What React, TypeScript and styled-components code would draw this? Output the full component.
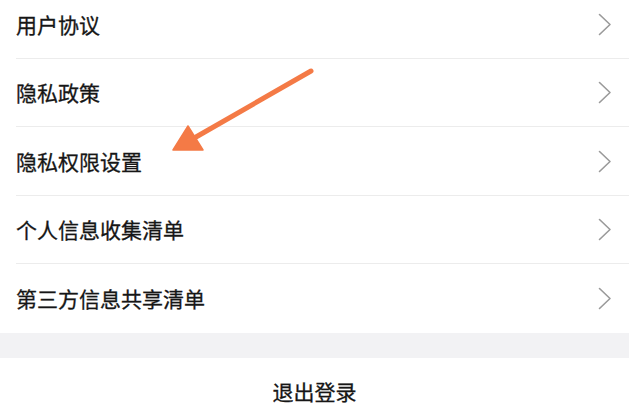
import { createGlobalStyle, styled } from 'styled-components';

const GlobalStyle = createGlobalStyle`
  html, body {
    margin: 0;
    padding: 0;
    background: #ffffff;
    overflow: hidden;
  }
  body {
    font-family: "Noto Sans CJK SC", "Noto Sans", sans-serif;
  }
`;

const items = ['用户协议', '隐私政策', '隐私权限设置', '个人信息收集清单', '第三方信息共享清单'];

const Chevron = () => (
  <svg width="14" height="23" viewBox="0 0 14 23" fill="none">
    <path d="M1.5 1.5 L12 11.5 L1.5 21.5" stroke="#9a9a9a" strokeWidth="1.6" strokeLinecap="round" strokeLinejoin="round" />
  </svg>
);

const Arrow = () => (
  <S.ArrowLayer width="629" height="413" viewBox="0 0 629 413">
    <line x1="311" y1="71" x2="196" y2="137" stroke="#f47a46" strokeWidth="5" strokeLinecap="round" />
    <polygon points="188,126 173,150 203,150" fill="#f47a46" stroke="#f47a46" strokeWidth="1.5" strokeLinejoin="round" />
  </S.ArrowLayer>
);

const App = () => {
  return (
    <S.Page>
      <GlobalStyle />
      <S.List>
        {items.map((label, i) => (
          <S.Row key={label} $last={i === items.length - 1}>
            <S.Label>{label}</S.Label>
            <S.ChevronBox>
              <Chevron />
            </S.ChevronBox>
          </S.Row>
        ))}
      </S.List>
      <S.Gap />
      <S.Logout>退出登录</S.Logout>
      <Arrow />
    </S.Page>
  );
};

export default App;

const S = {
  Page: styled.div`
    position: relative;
    width: 629px;
    height: 413px;
    overflow: hidden;
    background: #ffffff;
  `,
  List: styled.div`
    margin-top: -10px;
    display: flex;
    flex-direction: column;
  `,
  Row: styled.div<{ $last: boolean }>`
    height: 68.5px;
    margin-left: 16px;
    padding-right: 17px;
    display: flex;
    align-items: center;
    justify-content: space-between;
    box-sizing: border-box;
    border-bottom: ${p => (p.$last ? 'none' : '1px solid #ececec')};
    padding-top: 1px;
  `,
  Label: styled.span`
    font-size: 21px;
    color: #161616;
    line-height: 1;
    -webkit-text-stroke: 0.3px #161616;
  `,
  ChevronBox: styled.span`
    display: flex;
    align-items: center;
  `,
  Gap: styled.div`
    height: 25px;
    background: #f2f2f4;
  `,
  Logout: styled.div`
    height: 64px;
    display: flex;
    align-items: center;
    justify-content: center;
    font-size: 21px;
    color: #161616;
    -webkit-text-stroke: 0.3px #161616;
    padding-top: 2px;
    box-sizing: border-box;
  `,
  ArrowLayer: styled.svg`
    position: absolute;
    left: 0;
    top: 0;
    pointer-events: none;
  `,
};
